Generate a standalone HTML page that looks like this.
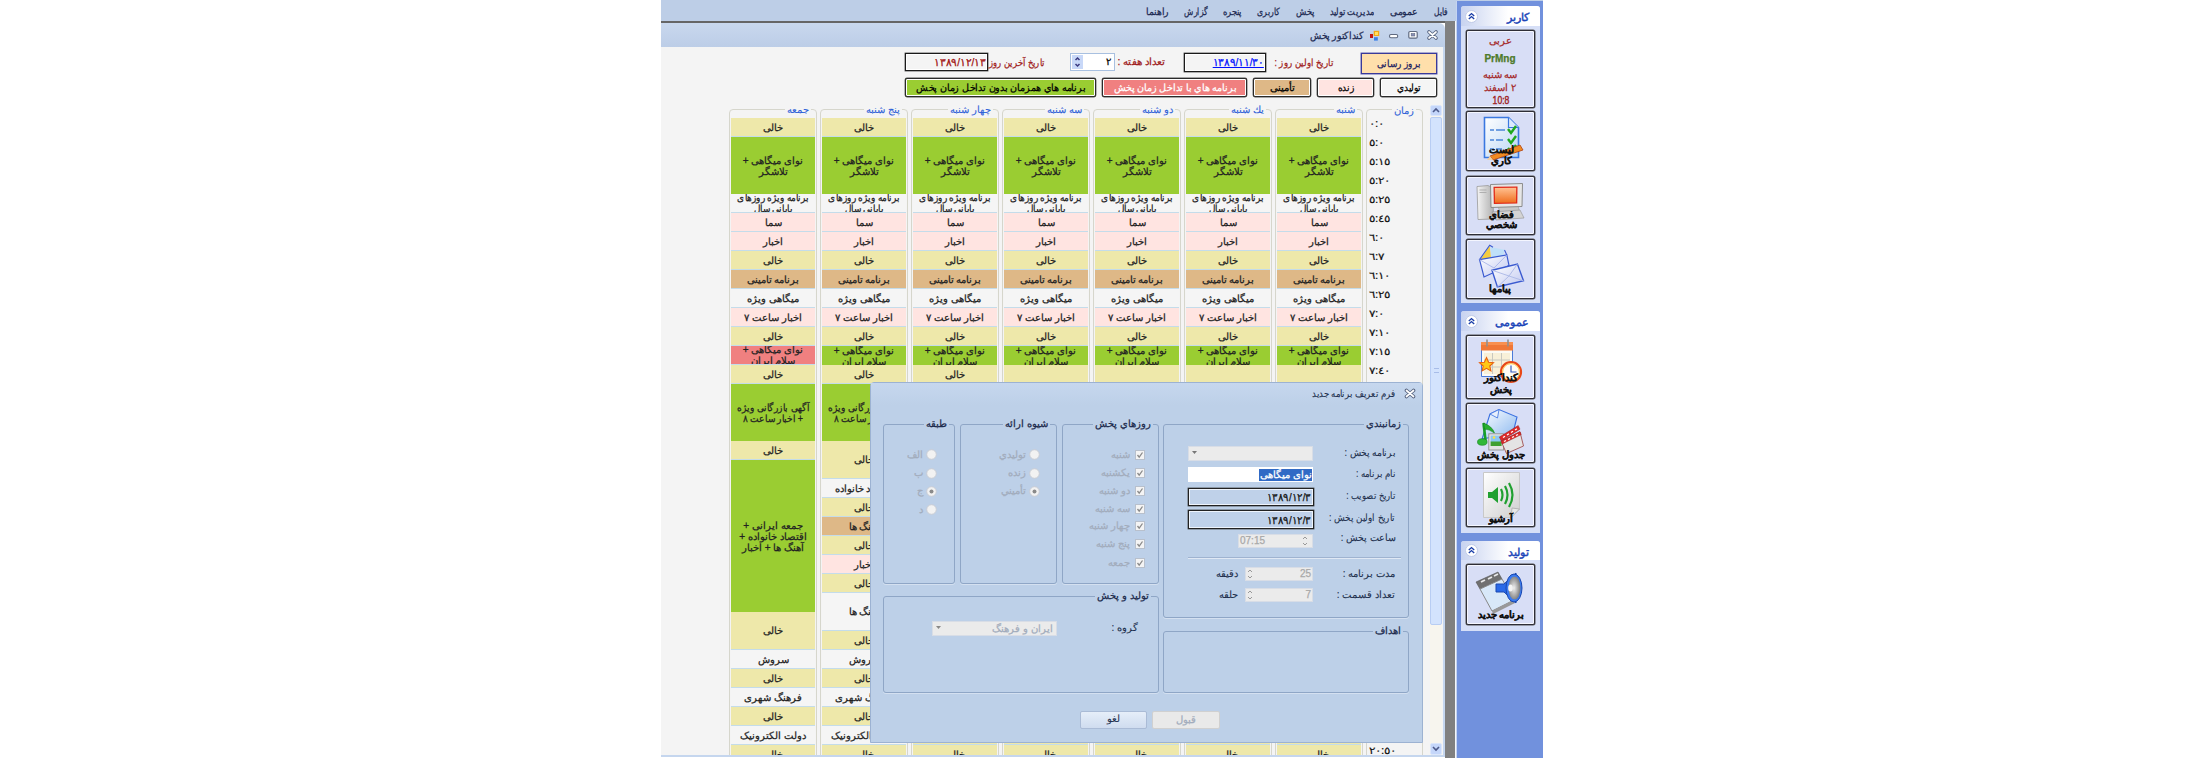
<!DOCTYPE html><html><head><meta charset="utf-8"><title>kondaktor</title><style>
*{box-sizing:border-box}
html,body{margin:0;padding:0;background:#fff}
body{width:2200px;height:760px;position:relative;overflow:hidden;font-family:"Liberation Sans",sans-serif;color:#000}
.ab{position:absolute}
.t{white-space:nowrap;direction:rtl;-webkit-text-stroke:0.25px currentColor}
.c{text-align:center}
</style></head><body>
<div class="ab " style="left:661px;top:0px;width:795px;height:21px;background:#bdcee7"></div>
<div class="ab t " style="right:752px;top:5.0px;height:14px;line-height:14px;font-size:10px;transform:scaleX(0.747);transform-origin:right center;color:#1b2850">فایل</div>
<div class="ab t " style="right:782px;top:5.0px;height:14px;line-height:14px;font-size:10px;transform:scaleX(0.927);transform-origin:right center;color:#1b2850">عمومی</div>
<div class="ab t " style="right:826px;top:5.0px;height:14px;line-height:14px;font-size:10px;transform:scaleX(0.822);transform-origin:right center;color:#1b2850">مدیریت تولید</div>
<div class="ab t " style="right:885.5px;top:5.0px;height:14px;line-height:14px;font-size:10px;transform:scaleX(0.841);transform-origin:right center;color:#1b2850">پخش</div>
<div class="ab t " style="right:920px;top:5.0px;height:14px;line-height:14px;font-size:10px;transform:scaleX(0.777);transform-origin:right center;color:#1b2850">کاربری</div>
<div class="ab t " style="right:958px;top:5.0px;height:14px;line-height:14px;font-size:10px;transform:scaleX(0.839);transform-origin:right center;color:#1b2850">پنجره</div>
<div class="ab t " style="right:992px;top:5.0px;height:14px;line-height:14px;font-size:10px;transform:scaleX(0.761);transform-origin:right center;color:#1b2850">گزارش</div>
<div class="ab t " style="right:1031px;top:5.0px;height:14px;line-height:14px;font-size:10px;transform:scaleX(0.92);transform-origin:right center;color:#1b2850">راهنما</div>
<div class="ab " style="left:661px;top:21px;width:795px;height:2px;background:#666"></div>
<div class="ab " style="left:1445px;top:21px;width:10px;height:737px;background:#808080"></div>
<div class="ab " style="left:1455px;top:21px;width:1px;height:737px;background:#f4f6fa"></div>
<div class="ab " style="left:661px;top:23px;width:784px;height:24px;background:linear-gradient(#c9d8ee,#bccde7);border-top-right-radius:6px"></div>
<div class="ab t " style="right:836px;top:28.5px;height:14px;line-height:14px;font-size:10px;transform:scaleX(0.92);transform-origin:right center;color:#1b2850">کنداکتور پخش</div>
<svg class="ab" style="left:1365px;top:25px" width="80" height="20"><rect x="5" y="9" width="3" height="4" fill="#c01818"/><rect x="8.7" y="5.8" width="5.5" height="5.2" fill="#f4a818"/><rect x="10" y="7" width="3" height="3" fill="#ffe060"/><rect x="9" y="12.2" width="3.8" height="3.4" fill="#3a80e8"/><rect x="24.5" y="9.5" width="8.2" height="3.2" rx="1.4" fill="#fff" stroke="#5f6a80" stroke-width="1.1"/><rect x="43.8" y="6.5" width="8.4" height="6.6" rx="1.2" fill="#fff" stroke="#5f6a80" stroke-width="1.2"/><rect x="46.2" y="8.6" width="3.6" height="2.4" fill="#8a90b8" stroke="#5f6a80" stroke-width="0.6"/><path d="M64 7 L71 13 M71 7 L64 13" stroke="#55627e" stroke-width="3.6" stroke-linecap="round"/><path d="M64 7 L71 13 M71 7 L64 13" stroke="#fff" stroke-width="1.7" stroke-linecap="round"/></svg>
<div class="ab " style="left:661px;top:47px;width:782px;height:708px;background:#f4f4f4"></div>
<div class="ab " style="left:1443px;top:47px;width:2px;height:710px;background:#c5d6ee"></div>
<div class="ab " style="left:661px;top:755px;width:784px;height:2px;background:#c5d6ee"></div>
<div class="ab " style="left:1361px;top:53px;width:76px;height:21px;background:#ffdfab;border:1px solid #3a3a9a;box-shadow:0 0 0 0.5px #6060b0"></div>
<div class="ab t c " style="left:1299.0px;width:200px;top:57.0px;height:14px;line-height:14px;font-size:10px;transform:scaleX(0.89);color:#1b2060">بروز رسانی</div>
<div class="ab " style="left:1184px;top:53px;width:82px;height:19px;background:#f4f4f4;border:1px solid #1a1a1a;box-shadow:inset 0 0 0 1px #fff,0 0 0 0.4px #444"></div>
<div class="ab t " style="right:936px;top:55.0px;height:14px;line-height:14px;font-size:10.5px;transform:scaleX(0.95);transform-origin:right center;color:#0010ff"><u>١٣٨٩/١١/٣٠</u></div>
<div class="ab t " style="right:867px;top:56.0px;height:14px;line-height:14px;font-size:10px;transform:scaleX(0.86);transform-origin:right center;color:#a02020">تاریخ اولین روز :</div>
<div class="ab " style="left:1070px;top:53px;width:45px;height:18px;background:#fff;border:1px solid #a8c0e0"></div>
<div class="ab " style="left:1072px;top:55px;width:11px;height:14px;background:#c8d8f8"></div>
<svg class="ab" style="left:1073px;top:55px" width="9" height="14"><path d="M2.5 5 L4.5 3 L6.5 5 M2.5 9 L4.5 11 L6.5 9" fill="none" stroke="#3a3a80" stroke-width="1.5"/></svg>
<div class="ab t " style="right:1089px;top:54.5px;height:14px;line-height:14px;font-size:10px;color:#000">٢</div>
<div class="ab t " style="right:1035px;top:55.0px;height:14px;line-height:14px;font-size:10px;transform:scaleX(1.03);transform-origin:right center;color:#a02020">تعداد هفته :</div>
<div class="ab " style="left:905px;top:53px;width:83px;height:18px;background:#f4f4f4;border:1px solid #1a1a1a;box-shadow:inset 0 0 0 1px #fff,0 0 0 0.4px #444"></div>
<div class="ab t " style="right:1214.5px;top:55.0px;height:14px;line-height:14px;font-size:10.5px;transform:scaleX(0.96);transform-origin:right center;color:#a01010">١٣٨٩/١٢/١٣</div>
<div class="ab t " style="right:1155px;top:56.0px;height:14px;line-height:14px;font-size:10px;transform:scaleX(0.84);transform-origin:right center;color:#a02020">تاریخ آخرین روز</div>
<div class="ab " style="left:1380px;top:78px;width:57px;height:19px;background:#f5f5f5;border:1px solid #2a2a2a;box-shadow:inset 0 0 0 1px #fff,0 0 0 0.4px #555;border-radius:2px"></div>
<div class="ab t c " style="left:1308.5px;width:200px;top:81.0px;height:14px;line-height:14px;font-size:10px;transform:scaleX(0.9);color:#000">توليدي</div>
<div class="ab " style="left:1317px;top:78px;width:57px;height:19px;background:#ffe4e1;border:1px solid #2a2a2a;box-shadow:inset 0 0 0 1px #fff,0 0 0 0.4px #555;border-radius:2px"></div>
<div class="ab t c " style="left:1245.5px;width:200px;top:81.0px;height:14px;line-height:14px;font-size:10px;transform:scaleX(0.9);color:#000">زنده</div>
<div class="ab " style="left:1253px;top:78px;width:58px;height:19px;background:#deb887;border:1px solid #2a2a2a;box-shadow:inset 0 0 0 1px #fff,0 0 0 0.4px #555;border-radius:2px"></div>
<div class="ab t c " style="left:1182.0px;width:200px;top:81.0px;height:14px;line-height:14px;font-size:10px;color:#000">تأمینی</div>
<div class="ab " style="left:1102px;top:78px;width:145px;height:19px;background:#f08080;border:1px solid #2a2a2a;box-shadow:inset 0 0 0 1px #fff,0 0 0 0.4px #555;border-radius:2px"></div>
<div class="ab t c " style="left:1074.5px;width:200px;top:81.0px;height:14px;line-height:14px;font-size:10px;transform:scaleX(0.96);color:#fff">برنامه هاي با تداخل زمان پخش</div>
<div class="ab " style="left:905px;top:78px;width:191px;height:19px;background:#9acd32;border:1px solid #2a2a2a;box-shadow:inset 0 0 0 1px #fff,0 0 0 0.4px #555;border-radius:2px"></div>
<div class="ab t c " style="left:900.5px;width:200px;top:81.0px;height:14px;line-height:14px;font-size:10px;transform:scaleX(0.96);color:#000">برنامه هاي همزمان بدون تداخل زمان پخش</div>
<div class="ab" style="left:661px;top:100px;width:782px;height:655px;overflow:hidden">
<div class="ab gb" style="left:68px;top:9px;width:88px;height:791px;"></div>
<div class="ab cell sep" style="left:70px;top:18px;width:84px;height:19px;background:#eee8aa">خالی</div>
<div class="ab cell " style="left:70px;top:37px;width:84px;height:57px;background:#9acd32">نوای میگاهی +<br>تلاشگر</div>
<div class="ab cell sep" style="left:70px;top:94px;width:84px;height:19px;background:#f5f5f5"><span style="display:inline-block;transform:scaleX(0.89)">برنامه ویژه روزهای<br>پایانی سال</span></div>
<div class="ab cell sep" style="left:70px;top:113px;width:84px;height:19px;background:#ffe4e1">سما</div>
<div class="ab cell sep" style="left:70px;top:132px;width:84px;height:19px;background:#ffe4e1">اخبار</div>
<div class="ab cell sep" style="left:70px;top:151px;width:84px;height:19px;background:#eee8aa">خالی</div>
<div class="ab cell sep" style="left:70px;top:170px;width:84px;height:19px;background:#deb887">برنامه تامینی</div>
<div class="ab cell sep" style="left:70px;top:189px;width:84px;height:19px;background:#f5f5f5">میگاهی ویژه</div>
<div class="ab cell sep" style="left:70px;top:208px;width:84px;height:19px;background:#ffe4e1">اخبار ساعت ٧</div>
<div class="ab cell sep" style="left:70px;top:227px;width:84px;height:19px;background:#eee8aa">خالی</div>
<div class="ab cell sep" style="left:70px;top:246px;width:84px;height:19px;background:#f08080">نوای میگاهی +<br>سلام ایران</div>
<div class="ab cell sep" style="left:70px;top:265px;width:84px;height:19px;background:#eee8aa">خالی</div>
<div class="ab cell " style="left:70px;top:284px;width:84px;height:57px;background:#9acd32"><span style="display:inline-block;transform:scaleX(0.9)">آگهی بازرگانی ویژه<br>+ اخبار ساعت ٨</span></div>
<div class="ab cell sep" style="left:70px;top:341px;width:84px;height:19px;background:#eee8aa">خالی</div>
<div class="ab cell " style="left:70px;top:360px;width:84px;height:152px;background:#9acd32">جمعه ایرانی +<br>اقتصاد خانواده +<br>آهنگ ها + اخبار</div>
<div class="ab cell sep" style="left:70px;top:512px;width:84px;height:38px;background:#eee8aa">خالی</div>
<div class="ab cell sep" style="left:70px;top:550px;width:84px;height:19px;background:#f5f5f5">سروش</div>
<div class="ab cell sep" style="left:70px;top:569px;width:84px;height:19px;background:#eee8aa">خالی</div>
<div class="ab cell sep" style="left:70px;top:588px;width:84px;height:19px;background:#f5f5f5">فرهنگ شهری</div>
<div class="ab cell sep" style="left:70px;top:607px;width:84px;height:19px;background:#eee8aa">خالی</div>
<div class="ab cell sep" style="left:70px;top:626px;width:84px;height:19px;background:#f5f5f5">دولت الکترونیک</div>
<div class="ab cell sep" style="left:70px;top:645px;width:84px;height:19px;background:#eee8aa">خالی</div>
<div class="ab t gt" style="right:632px;top:3px;height:14px;line-height:14px;font-size:10px">جمعه</div>
<div class="ab gb" style="left:159px;top:9px;width:88px;height:791px;"></div>
<div class="ab cell sep" style="left:161px;top:18px;width:84px;height:19px;background:#eee8aa">خالی</div>
<div class="ab cell " style="left:161px;top:37px;width:84px;height:57px;background:#9acd32">نوای میگاهی +<br>تلاشگر</div>
<div class="ab cell sep" style="left:161px;top:94px;width:84px;height:19px;background:#f5f5f5"><span style="display:inline-block;transform:scaleX(0.89)">برنامه ویژه روزهای<br>پایانی سال</span></div>
<div class="ab cell sep" style="left:161px;top:113px;width:84px;height:19px;background:#ffe4e1">سما</div>
<div class="ab cell sep" style="left:161px;top:132px;width:84px;height:19px;background:#ffe4e1">اخبار</div>
<div class="ab cell sep" style="left:161px;top:151px;width:84px;height:19px;background:#eee8aa">خالی</div>
<div class="ab cell sep" style="left:161px;top:170px;width:84px;height:19px;background:#deb887">برنامه تامینی</div>
<div class="ab cell sep" style="left:161px;top:189px;width:84px;height:19px;background:#f5f5f5">میگاهی ویژه</div>
<div class="ab cell sep" style="left:161px;top:208px;width:84px;height:19px;background:#ffe4e1">اخبار ساعت ٧</div>
<div class="ab cell sep" style="left:161px;top:227px;width:84px;height:19px;background:#eee8aa">خالی</div>
<div class="ab cell " style="left:161px;top:246px;width:84px;height:19px;background:#9acd32">نوای میگاهی +<br>سلام ایران</div>
<div class="ab cell sep" style="left:161px;top:265px;width:84px;height:19px;background:#eee8aa">خالی</div>
<div class="ab cell " style="left:161px;top:284px;width:84px;height:57px;background:#9acd32"><span style="display:inline-block;transform:scaleX(0.9)">آگهی بازرگانی ویژه<br>+ اخبار ساعت ٨</span></div>
<div class="ab cell sep" style="left:161px;top:341px;width:84px;height:38px;background:#eee8aa">خالی</div>
<div class="ab cell sep" style="left:161px;top:379px;width:84px;height:19px;background:#f5f5f5">اقتصاد خانواده</div>
<div class="ab cell sep" style="left:161px;top:398px;width:84px;height:19px;background:#eee8aa">خالی</div>
<div class="ab cell sep" style="left:161px;top:417px;width:84px;height:19px;background:#deb887">آهنگ ها</div>
<div class="ab cell sep" style="left:161px;top:436px;width:84px;height:19px;background:#eee8aa">خالی</div>
<div class="ab cell sep" style="left:161px;top:455px;width:84px;height:19px;background:#ffe4e1">اخبار</div>
<div class="ab cell sep" style="left:161px;top:474px;width:84px;height:19px;background:#eee8aa">خالی</div>
<div class="ab cell sep" style="left:161px;top:493px;width:84px;height:38px;background:#f5f5f5">آهنگ ها</div>
<div class="ab cell sep" style="left:161px;top:531px;width:84px;height:19px;background:#eee8aa">خالی</div>
<div class="ab cell sep" style="left:161px;top:550px;width:84px;height:19px;background:#f5f5f5">سروش</div>
<div class="ab cell sep" style="left:161px;top:569px;width:84px;height:19px;background:#eee8aa">خالی</div>
<div class="ab cell sep" style="left:161px;top:588px;width:84px;height:19px;background:#f5f5f5">فرهنگ شهری</div>
<div class="ab cell sep" style="left:161px;top:607px;width:84px;height:19px;background:#eee8aa">خالی</div>
<div class="ab cell sep" style="left:161px;top:626px;width:84px;height:19px;background:#f5f5f5">دولت الکترونیک</div>
<div class="ab cell sep" style="left:161px;top:645px;width:84px;height:19px;background:#eee8aa">خالی</div>
<div class="ab t gt" style="right:541px;top:3px;height:14px;line-height:14px;font-size:10px">پنج شنبه</div>
<div class="ab gb" style="left:250px;top:9px;width:88px;height:791px;"></div>
<div class="ab cell sep" style="left:252px;top:18px;width:84px;height:19px;background:#eee8aa">خالی</div>
<div class="ab cell " style="left:252px;top:37px;width:84px;height:57px;background:#9acd32">نوای میگاهی +<br>تلاشگر</div>
<div class="ab cell sep" style="left:252px;top:94px;width:84px;height:19px;background:#f5f5f5"><span style="display:inline-block;transform:scaleX(0.89)">برنامه ویژه روزهای<br>پایانی سال</span></div>
<div class="ab cell sep" style="left:252px;top:113px;width:84px;height:19px;background:#ffe4e1">سما</div>
<div class="ab cell sep" style="left:252px;top:132px;width:84px;height:19px;background:#ffe4e1">اخبار</div>
<div class="ab cell sep" style="left:252px;top:151px;width:84px;height:19px;background:#eee8aa">خالی</div>
<div class="ab cell sep" style="left:252px;top:170px;width:84px;height:19px;background:#deb887">برنامه تامینی</div>
<div class="ab cell sep" style="left:252px;top:189px;width:84px;height:19px;background:#f5f5f5">میگاهی ویژه</div>
<div class="ab cell sep" style="left:252px;top:208px;width:84px;height:19px;background:#ffe4e1">اخبار ساعت ٧</div>
<div class="ab cell sep" style="left:252px;top:227px;width:84px;height:19px;background:#eee8aa">خالی</div>
<div class="ab cell " style="left:252px;top:246px;width:84px;height:19px;background:#9acd32">نوای میگاهی +<br>سلام ایران</div>
<div class="ab cell sep" style="left:252px;top:265px;width:84px;height:19px;background:#eee8aa">خالی</div>
<div class="ab cell sep" style="left:252px;top:284px;width:84px;height:361px;background:#eee8aa"></div>
<div class="ab cell sep" style="left:252px;top:645px;width:84px;height:19px;background:#eee8aa">خالی</div>
<div class="ab t gt" style="right:450px;top:3px;height:14px;line-height:14px;font-size:10px">چهار شنبه</div>
<div class="ab gb" style="left:341px;top:9px;width:88px;height:791px;"></div>
<div class="ab cell sep" style="left:343px;top:18px;width:84px;height:19px;background:#eee8aa">خالی</div>
<div class="ab cell " style="left:343px;top:37px;width:84px;height:57px;background:#9acd32">نوای میگاهی +<br>تلاشگر</div>
<div class="ab cell sep" style="left:343px;top:94px;width:84px;height:19px;background:#f5f5f5"><span style="display:inline-block;transform:scaleX(0.89)">برنامه ویژه روزهای<br>پایانی سال</span></div>
<div class="ab cell sep" style="left:343px;top:113px;width:84px;height:19px;background:#ffe4e1">سما</div>
<div class="ab cell sep" style="left:343px;top:132px;width:84px;height:19px;background:#ffe4e1">اخبار</div>
<div class="ab cell sep" style="left:343px;top:151px;width:84px;height:19px;background:#eee8aa">خالی</div>
<div class="ab cell sep" style="left:343px;top:170px;width:84px;height:19px;background:#deb887">برنامه تامینی</div>
<div class="ab cell sep" style="left:343px;top:189px;width:84px;height:19px;background:#f5f5f5">میگاهی ویژه</div>
<div class="ab cell sep" style="left:343px;top:208px;width:84px;height:19px;background:#ffe4e1">اخبار ساعت ٧</div>
<div class="ab cell sep" style="left:343px;top:227px;width:84px;height:19px;background:#eee8aa">خالی</div>
<div class="ab cell " style="left:343px;top:246px;width:84px;height:19px;background:#9acd32">نوای میگاهی +<br>سلام ایران</div>
<div class="ab cell sep" style="left:343px;top:265px;width:84px;height:38px;background:#eee8aa"><span style="position:relative;top:3px">خالی</span></div>
<div class="ab cell sep" style="left:343px;top:303px;width:84px;height:342px;background:#eee8aa"></div>
<div class="ab cell sep" style="left:343px;top:645px;width:84px;height:19px;background:#eee8aa">خالی</div>
<div class="ab t gt" style="right:359px;top:3px;height:14px;line-height:14px;font-size:10px">سه شنبه</div>
<div class="ab gb" style="left:432px;top:9px;width:88px;height:791px;"></div>
<div class="ab cell sep" style="left:434px;top:18px;width:84px;height:19px;background:#eee8aa">خالی</div>
<div class="ab cell " style="left:434px;top:37px;width:84px;height:57px;background:#9acd32">نوای میگاهی +<br>تلاشگر</div>
<div class="ab cell sep" style="left:434px;top:94px;width:84px;height:19px;background:#f5f5f5"><span style="display:inline-block;transform:scaleX(0.89)">برنامه ویژه روزهای<br>پایانی سال</span></div>
<div class="ab cell sep" style="left:434px;top:113px;width:84px;height:19px;background:#ffe4e1">سما</div>
<div class="ab cell sep" style="left:434px;top:132px;width:84px;height:19px;background:#ffe4e1">اخبار</div>
<div class="ab cell sep" style="left:434px;top:151px;width:84px;height:19px;background:#eee8aa">خالی</div>
<div class="ab cell sep" style="left:434px;top:170px;width:84px;height:19px;background:#deb887">برنامه تامینی</div>
<div class="ab cell sep" style="left:434px;top:189px;width:84px;height:19px;background:#f5f5f5">میگاهی ویژه</div>
<div class="ab cell sep" style="left:434px;top:208px;width:84px;height:19px;background:#ffe4e1">اخبار ساعت ٧</div>
<div class="ab cell sep" style="left:434px;top:227px;width:84px;height:19px;background:#eee8aa">خالی</div>
<div class="ab cell " style="left:434px;top:246px;width:84px;height:19px;background:#9acd32">نوای میگاهی +<br>سلام ایران</div>
<div class="ab cell sep" style="left:434px;top:265px;width:84px;height:38px;background:#eee8aa"><span style="position:relative;top:3px">خالی</span></div>
<div class="ab cell sep" style="left:434px;top:303px;width:84px;height:342px;background:#eee8aa"></div>
<div class="ab cell sep" style="left:434px;top:645px;width:84px;height:19px;background:#eee8aa">خالی</div>
<div class="ab t gt" style="right:268px;top:3px;height:14px;line-height:14px;font-size:10px">دو شنبه</div>
<div class="ab gb" style="left:523px;top:9px;width:88px;height:791px;"></div>
<div class="ab cell sep" style="left:525px;top:18px;width:84px;height:19px;background:#eee8aa">خالی</div>
<div class="ab cell " style="left:525px;top:37px;width:84px;height:57px;background:#9acd32">نوای میگاهی +<br>تلاشگر</div>
<div class="ab cell sep" style="left:525px;top:94px;width:84px;height:19px;background:#f5f5f5"><span style="display:inline-block;transform:scaleX(0.89)">برنامه ویژه روزهای<br>پایانی سال</span></div>
<div class="ab cell sep" style="left:525px;top:113px;width:84px;height:19px;background:#ffe4e1">سما</div>
<div class="ab cell sep" style="left:525px;top:132px;width:84px;height:19px;background:#ffe4e1">اخبار</div>
<div class="ab cell sep" style="left:525px;top:151px;width:84px;height:19px;background:#eee8aa">خالی</div>
<div class="ab cell sep" style="left:525px;top:170px;width:84px;height:19px;background:#deb887">برنامه تامینی</div>
<div class="ab cell sep" style="left:525px;top:189px;width:84px;height:19px;background:#f5f5f5">میگاهی ویژه</div>
<div class="ab cell sep" style="left:525px;top:208px;width:84px;height:19px;background:#ffe4e1">اخبار ساعت ٧</div>
<div class="ab cell sep" style="left:525px;top:227px;width:84px;height:19px;background:#eee8aa">خالی</div>
<div class="ab cell " style="left:525px;top:246px;width:84px;height:19px;background:#9acd32">نوای میگاهی +<br>سلام ایران</div>
<div class="ab cell sep" style="left:525px;top:265px;width:84px;height:38px;background:#eee8aa"><span style="position:relative;top:3px">خالی</span></div>
<div class="ab cell sep" style="left:525px;top:303px;width:84px;height:342px;background:#eee8aa"></div>
<div class="ab cell sep" style="left:525px;top:645px;width:84px;height:19px;background:#eee8aa">خالی</div>
<div class="ab t gt" style="right:177px;top:3px;height:14px;line-height:14px;font-size:10px">يك شنبه</div>
<div class="ab gb" style="left:614px;top:9px;width:88px;height:791px;"></div>
<div class="ab cell sep" style="left:616px;top:18px;width:84px;height:19px;background:#eee8aa">خالی</div>
<div class="ab cell " style="left:616px;top:37px;width:84px;height:57px;background:#9acd32">نوای میگاهی +<br>تلاشگر</div>
<div class="ab cell sep" style="left:616px;top:94px;width:84px;height:19px;background:#f5f5f5"><span style="display:inline-block;transform:scaleX(0.89)">برنامه ویژه روزهای<br>پایانی سال</span></div>
<div class="ab cell sep" style="left:616px;top:113px;width:84px;height:19px;background:#ffe4e1">سما</div>
<div class="ab cell sep" style="left:616px;top:132px;width:84px;height:19px;background:#ffe4e1">اخبار</div>
<div class="ab cell sep" style="left:616px;top:151px;width:84px;height:19px;background:#eee8aa">خالی</div>
<div class="ab cell sep" style="left:616px;top:170px;width:84px;height:19px;background:#deb887">برنامه تامینی</div>
<div class="ab cell sep" style="left:616px;top:189px;width:84px;height:19px;background:#f5f5f5">میگاهی ویژه</div>
<div class="ab cell sep" style="left:616px;top:208px;width:84px;height:19px;background:#ffe4e1">اخبار ساعت ٧</div>
<div class="ab cell sep" style="left:616px;top:227px;width:84px;height:19px;background:#eee8aa">خالی</div>
<div class="ab cell " style="left:616px;top:246px;width:84px;height:19px;background:#9acd32">نوای میگاهی +<br>سلام ایران</div>
<div class="ab cell sep" style="left:616px;top:265px;width:84px;height:38px;background:#eee8aa"><span style="position:relative;top:3px">خالی</span></div>
<div class="ab cell sep" style="left:616px;top:303px;width:84px;height:342px;background:#eee8aa"></div>
<div class="ab cell sep" style="left:616px;top:645px;width:84px;height:19px;background:#eee8aa">خالی</div>
<div class="ab t gt" style="right:86px;top:3px;height:14px;line-height:14px;font-size:10px">شنبه</div>
<div class="ab gb" style="left:705px;top:9px;width:57px;height:791px;"></div>
<div class="ab t gt" style="right:27px;top:3.5px;height:14px;line-height:14px;font-size:10px">زمان</div>
<div class="ab t" style="left:708px;top:17px;height:14px;line-height:14px;font-size:10px;color:#111;transform:scaleX(1.2);transform-origin:left center;-webkit-text-stroke:0.15px #111">٠:٠</div>
<div class="ab t" style="left:708px;top:36px;height:14px;line-height:14px;font-size:10px;color:#111;transform:scaleX(1.2);transform-origin:left center;-webkit-text-stroke:0.15px #111">٥:٠</div>
<div class="ab t" style="left:708px;top:55px;height:14px;line-height:14px;font-size:10px;color:#111;transform:scaleX(1.2);transform-origin:left center;-webkit-text-stroke:0.15px #111">٥:١٥</div>
<div class="ab t" style="left:708px;top:74px;height:14px;line-height:14px;font-size:10px;color:#111;transform:scaleX(1.2);transform-origin:left center;-webkit-text-stroke:0.15px #111">٥:٢٠</div>
<div class="ab t" style="left:708px;top:93px;height:14px;line-height:14px;font-size:10px;color:#111;transform:scaleX(1.2);transform-origin:left center;-webkit-text-stroke:0.15px #111">٥:٢٥</div>
<div class="ab t" style="left:708px;top:112px;height:14px;line-height:14px;font-size:10px;color:#111;transform:scaleX(1.2);transform-origin:left center;-webkit-text-stroke:0.15px #111">٥:٤٥</div>
<div class="ab t" style="left:708px;top:131px;height:14px;line-height:14px;font-size:10px;color:#111;transform:scaleX(1.2);transform-origin:left center;-webkit-text-stroke:0.15px #111">٦:٠</div>
<div class="ab t" style="left:708px;top:150px;height:14px;line-height:14px;font-size:10px;color:#111;transform:scaleX(1.2);transform-origin:left center;-webkit-text-stroke:0.15px #111">٦:٧</div>
<div class="ab t" style="left:708px;top:169px;height:14px;line-height:14px;font-size:10px;color:#111;transform:scaleX(1.2);transform-origin:left center;-webkit-text-stroke:0.15px #111">٦:١٠</div>
<div class="ab t" style="left:708px;top:188px;height:14px;line-height:14px;font-size:10px;color:#111;transform:scaleX(1.2);transform-origin:left center;-webkit-text-stroke:0.15px #111">٦:٢٥</div>
<div class="ab t" style="left:708px;top:207px;height:14px;line-height:14px;font-size:10px;color:#111;transform:scaleX(1.2);transform-origin:left center;-webkit-text-stroke:0.15px #111">٧:٠</div>
<div class="ab t" style="left:708px;top:226px;height:14px;line-height:14px;font-size:10px;color:#111;transform:scaleX(1.2);transform-origin:left center;-webkit-text-stroke:0.15px #111">٧:١٠</div>
<div class="ab t" style="left:708px;top:245px;height:14px;line-height:14px;font-size:10px;color:#111;transform:scaleX(1.2);transform-origin:left center;-webkit-text-stroke:0.15px #111">٧:١٥</div>
<div class="ab t" style="left:708px;top:264px;height:14px;line-height:14px;font-size:10px;color:#111;transform:scaleX(1.2);transform-origin:left center;-webkit-text-stroke:0.15px #111">٧:٤٠</div>
<div class="ab t" style="left:708px;top:283px;height:14px;line-height:14px;font-size:10px;color:#111;transform:scaleX(1.2);transform-origin:left center;-webkit-text-stroke:0.15px #111">٨:٠</div>
<div class="ab t" style="left:708px;top:644px;height:14px;line-height:14px;font-size:10px;color:#111;transform:scaleX(1.2);transform-origin:left center;-webkit-text-stroke:0.15px #111">٢٠:٥٠</div>
</div>
<div class="ab " style="left:1430px;top:105px;width:12px;height:650px;background:#f7f5ee"></div>
<div class="ab " style="left:1430px;top:105px;width:12px;height:11px;background:#c4d6fa;border:1px solid #dbe6fb;border-radius:2px"></div>
<svg class="ab" style="left:1431px;top:106px" width="10" height="9"><path d="M2 6 L5 3 L8 6" fill="none" stroke="#4d5a8a" stroke-width="1.6"/></svg>
<div class="ab " style="left:1430px;top:117px;width:12px;height:508px;background:#d3e3fd;border:1px solid #b8cdf3;border-radius:2px"></div>
<div class="ab " style="left:1434px;top:368px;width:5px;height:5px;border-top:1px solid #a8bde8;border-bottom:1px solid #a8bde8"></div>
<div class="ab " style="left:1430px;top:743px;width:12px;height:12px;background:#c4d6fa;border:1px solid #dbe6fb;border-radius:2px"></div>
<svg class="ab" style="left:1431px;top:744px" width="10" height="9"><path d="M2 3 L5 6 L8 3" fill="none" stroke="#4d5a8a" stroke-width="1.6"/></svg>
<div class="ab " style="left:1456px;top:0px;width:87px;height:758px;background:#7191dd"></div>
<div class="ab " style="left:1456px;top:0px;width:1px;height:758px;background:#c4d4f2"></div>
<div class="ab " style="left:1456px;top:0px;width:87px;height:1px;background:#bdcee7"></div>
<div class="ab " style="left:1461px;top:6px;width:79px;height:297px;background:#d6dff7;border-radius:3px 3px 0 0"></div>
<div class="ab " style="left:1461px;top:6px;width:79px;height:20px;background:linear-gradient(to right,#c8d3f0,#ffffff 60%);border-radius:3px 3px 0 0"></div>
<div class="ab t " style="right:671.5px;top:10.3px;height:14px;line-height:14px;font-size:11px;color:#1a44b8;-webkit-text-stroke:0.45px #1a44b8">کاربر</div>
<svg class="ab" style="left:1464px;top:8.7px" width="15" height="15"><circle cx="7.5" cy="7.5" r="6" fill="#fff" stroke="#c0cbe8" stroke-width="1"/><path d="M4.8 7 L7.5 4.6 L10.2 7 M4.8 10 L7.5 7.6 L10.2 10" fill="none" stroke="#1b3fa8" stroke-width="1.4"/></svg>
<div class="ab " style="left:1461px;top:311px;width:79px;height:222px;background:#d6dff7;border-radius:3px 3px 0 0"></div>
<div class="ab " style="left:1461px;top:311px;width:79px;height:20px;background:linear-gradient(to right,#c8d3f0,#ffffff 60%);border-radius:3px 3px 0 0"></div>
<div class="ab t " style="right:671.5px;top:315.3px;height:14px;line-height:14px;font-size:11px;color:#1a44b8;-webkit-text-stroke:0.45px #1a44b8">عمومی</div>
<svg class="ab" style="left:1464px;top:313.7px" width="15" height="15"><circle cx="7.5" cy="7.5" r="6" fill="#fff" stroke="#c0cbe8" stroke-width="1"/><path d="M4.8 7 L7.5 4.6 L10.2 7 M4.8 10 L7.5 7.6 L10.2 10" fill="none" stroke="#1b3fa8" stroke-width="1.4"/></svg>
<div class="ab " style="left:1461px;top:541px;width:79px;height:90px;background:#d6dff7;border-radius:3px 3px 0 0"></div>
<div class="ab " style="left:1461px;top:541px;width:79px;height:19px;background:linear-gradient(to right,#c8d3f0,#ffffff 60%);border-radius:3px 3px 0 0"></div>
<div class="ab t " style="right:671.5px;top:544.8px;height:14px;line-height:14px;font-size:11px;color:#1a44b8;-webkit-text-stroke:0.45px #1a44b8">تولید</div>
<svg class="ab" style="left:1464px;top:543.2px" width="15" height="15"><circle cx="7.5" cy="7.5" r="6" fill="#fff" stroke="#c0cbe8" stroke-width="1"/><path d="M4.8 7 L7.5 4.6 L10.2 7 M4.8 10 L7.5 7.6 L10.2 10" fill="none" stroke="#1b3fa8" stroke-width="1.4"/></svg>
<div class="ab " style="left:1466px;top:30px;width:69px;height:78px;border:1px solid #2e2e36;box-shadow:inset 0 0 0 1px #f4f6ff,0 0 0 0.5px #555;border-radius:2px;background:#d8def6"></div>
<div class="ab t c " style="left:1400.5px;width:200px;top:33.5px;height:14px;line-height:14px;font-size:10px;color:#a52a2a">عربی</div>
<div class="ab t c " style="left:1400.0px;width:200px;top:52.0px;height:14px;line-height:14px;font-size:10px;color:#4e7a2a;font-weight:bold">PrMng</div>
<div class="ab t c " style="left:1400.0px;width:200px;top:68.0px;height:14px;line-height:14px;font-size:10px;color:#a52a2a">سه شنبه</div>
<div class="ab t c " style="left:1400.0px;width:200px;top:80.5px;height:14px;line-height:14px;font-size:10px;color:#a52a2a">٢ اسفند</div>
<div class="ab t c " style="left:1400.5px;width:200px;top:92.5px;height:14px;line-height:14px;font-size:10.5px;transform:scaleX(0.82);color:#a02222;-webkit-text-stroke:0.4px #a02222">10:8</div>
<div class="ab " style="left:1466px;top:111px;width:69px;height:60px;border:1px solid #2e2e36;box-shadow:inset 0 0 0 1px #f4f6ff,0 0 0 0.5px #555;border-radius:2px;background:#d8def6"></div>
<div class="ab " style="left:1466px;top:176px;width:69px;height:59px;border:1px solid #2e2e36;box-shadow:inset 0 0 0 1px #f4f6ff,0 0 0 0.5px #555;border-radius:2px;background:#d8def6"></div>
<div class="ab " style="left:1466px;top:239px;width:69px;height:60px;border:1px solid #2e2e36;box-shadow:inset 0 0 0 1px #f4f6ff,0 0 0 0.5px #555;border-radius:2px;background:#d8def6"></div>
<div class="ab " style="left:1466px;top:335px;width:69px;height:64px;border:1px solid #2e2e36;box-shadow:inset 0 0 0 1px #f4f6ff,0 0 0 0.5px #555;border-radius:2px;background:#d8def6"></div>
<div class="ab " style="left:1466px;top:403px;width:69px;height:60px;border:1px solid #2e2e36;box-shadow:inset 0 0 0 1px #f4f6ff,0 0 0 0.5px #555;border-radius:2px;background:#d8def6"></div>
<div class="ab " style="left:1466px;top:468px;width:69px;height:59px;border:1px solid #2e2e36;box-shadow:inset 0 0 0 1px #f4f6ff,0 0 0 0.5px #555;border-radius:2px;background:#d8def6"></div>
<div class="ab " style="left:1466px;top:564px;width:69px;height:61px;border:1px solid #2e2e36;box-shadow:inset 0 0 0 1px #f4f6ff,0 0 0 0.5px #555;border-radius:2px;background:#d8def6"></div>
<div class="ab dg" style="left:870px;top:382px;width:553px;height:361px;"></div>
<div class="ab " style="left:871px;top:383px;width:551px;height:22px;background:linear-gradient(#c6d7ee,#bdd0e8)"></div>
<div class="ab t dl" style="right:805px;top:387.5px;height:14px;line-height:14px;font-size:10px;transform:scaleX(0.86);transform-origin:right center;">فرم تعریف برنامه جدید</div>
<svg class="ab" style="left:1404px;top:388px" width="12" height="12"><path d="M2.5 2.5 L9.5 8.5 M9.5 2.5 L2.5 8.5" stroke="#55627e" stroke-width="3.6" stroke-linecap="round"/><path d="M2.5 2.5 L9.5 8.5 M9.5 2.5 L2.5 8.5" stroke="#fff" stroke-width="1.7" stroke-linecap="round"/></svg>
<div class="ab fg" style="left:1163px;top:424px;width:246px;height:194px;"></div>
<div class="ab t ft" style="right:797px;top:417.0px;height:14px;line-height:14px;font-size:10px;font-size:10px">زمانبندي</div>
<div class="ab fg" style="left:1163px;top:631px;width:246px;height:62px;"></div>
<div class="ab t ft" style="right:797px;top:624.0px;height:14px;line-height:14px;font-size:10px;font-size:10px">اهداف</div>
<div class="ab fg" style="left:1062px;top:424px;width:97px;height:160px;"></div>
<div class="ab t ft" style="right:1047px;top:417.0px;height:14px;line-height:14px;font-size:10px;font-size:10px">روزهاي پخش</div>
<div class="ab fg" style="left:960px;top:424px;width:97px;height:160px;"></div>
<div class="ab t ft" style="right:1150px;top:417.0px;height:14px;line-height:14px;font-size:10px;font-size:10px">شیوه ارائه</div>
<div class="ab fg" style="left:883px;top:424px;width:72px;height:160px;"></div>
<div class="ab t ft" style="right:1251px;top:417.0px;height:14px;line-height:14px;font-size:10px;font-size:10px">طبقه</div>
<div class="ab fg" style="left:883px;top:596px;width:276px;height:97px;"></div>
<div class="ab t ft" style="right:1049px;top:589.0px;height:14px;line-height:14px;font-size:10px;font-size:10px">تولید و پخش</div>
<div class="ab t dl" style="right:805px;top:447.0px;height:14px;line-height:14px;font-size:10px;transform:scaleX(0.92);transform-origin:right center;">برنامه پخش :</div>
<div class="ab inp" style="left:1188px;top:446px;width:125px;height:15px;"></div>
<svg class="ab" style="left:1192px;top:451px" width="6" height="4"><path d="M0 0 L5 0 L2.5 3z" fill="#777"/></svg>
<div class="ab t dl" style="right:805px;top:468.0px;height:14px;line-height:14px;font-size:10px;transform:scaleX(0.87);transform-origin:right center;">نام برنامه :</div>
<div class="ab " style="left:1188px;top:467px;width:125px;height:15px;background:#fff"></div>
<div class="ab " style="left:1259px;top:469px;width:53px;height:12px;background:#316ac5"></div>
<div class="ab t " style="right:888px;top:468.0px;height:14px;line-height:14px;font-size:10px;color:#fff;overflow:hidden;width:53px">نوای میگاهی</div>
<div class="ab t dl" style="right:805px;top:490.0px;height:14px;line-height:14px;font-size:10px;transform:scaleX(0.84);transform-origin:right center;">تاریخ تصویب :</div>
<div class="ab " style="left:1188px;top:488px;width:126px;height:18px;border:1px solid #222;box-shadow:inset 0 0 0 1px #eef4fc,0 0 0 0.4px #444;background:#bfd1e9"></div>
<div class="ab t " style="right:889px;top:490.0px;height:14px;line-height:14px;font-size:10.5px;transform:scaleX(0.92);transform-origin:right center;color:#111">١٣٨٩/١٢/٣</div>
<div class="ab t dl" style="right:805px;top:512.0px;height:14px;line-height:14px;font-size:10px;transform:scaleX(0.88);transform-origin:right center;">تاریخ اولین پخش :</div>
<div class="ab " style="left:1188px;top:510px;width:126px;height:19px;border:1px solid #222;box-shadow:inset 0 0 0 1px #eef4fc,0 0 0 0.4px #444;background:#bfd1e9"></div>
<div class="ab t " style="right:889px;top:512.5px;height:14px;line-height:14px;font-size:10.5px;transform:scaleX(0.92);transform-origin:right center;color:#111">١٣٨٩/١٢/٣</div>
<div class="ab t dl" style="right:805px;top:532.0px;height:14px;line-height:14px;font-size:10px;transform:scaleX(0.95);transform-origin:right center;">ساعت پخش :</div>
<div class="ab inp" style="left:1238px;top:534px;width:75px;height:14px;"></div>
<div class="ab t " style="left:1240px;top:534.0px;height:14px;line-height:14px;font-size:10px;direction:ltr;color:#a8a8a8">07:15</div>
<svg class="ab" style="left:1302px;top:535px" width="7" height="12"><path d="M1 4 L3 2 L5 4 M1 8 L3 10 L5 8" fill="none" stroke="#999" stroke-width="1"/></svg>
<div class="ab " style="left:1188px;top:557px;width:213px;height:2px;border-top:1px solid #9fb3d0;border-bottom:1px solid #e0e8f4"></div>
<div class="ab t dl" style="right:805px;top:568.0px;height:14px;line-height:14px;font-size:10px;">مدت برنامه :</div>
<div class="ab inp" style="left:1245px;top:567px;width:68px;height:14px;"></div>
<div class="ab t " style="right:889px;top:567.0px;height:14px;line-height:14px;font-size:10px;color:#a8a8a8;direction:ltr">25</div>
<svg class="ab" style="left:1247px;top:568px" width="7" height="12"><path d="M1 4 L3 2 L5 4 M1 8 L3 10 L5 8" fill="none" stroke="#999" stroke-width="1"/></svg>
<div class="ab t dl" style="right:962px;top:568.0px;height:14px;line-height:14px;font-size:10px;">دقیقه</div>
<div class="ab t dl" style="right:805px;top:589.0px;height:14px;line-height:14px;font-size:10px;">تعداد قسمت :</div>
<div class="ab inp" style="left:1245px;top:588px;width:68px;height:14px;"></div>
<div class="ab t " style="right:889px;top:588.0px;height:14px;line-height:14px;font-size:10px;color:#a8a8a8;direction:ltr">7</div>
<svg class="ab" style="left:1247px;top:589px" width="7" height="12"><path d="M1 4 L3 2 L5 4 M1 8 L3 10 L5 8" fill="none" stroke="#999" stroke-width="1"/></svg>
<div class="ab t dl" style="right:962px;top:589.0px;height:14px;line-height:14px;font-size:10px;">حلقه</div>
<div class="ab " style="left:1135px;top:449.7px;width:10px;height:10.0px;background:#f4f4f4;border:1px solid #b8c0cc"></div>
<svg class="ab" style="left:1136px;top:450.7px" width="8" height="8"><path d="M1.5 4 L3.2 6.2 L6.5 1.5" fill="none" stroke="#8a8a8a" stroke-width="1.3"/></svg>
<div class="ab t dis" style="right:1070px;top:447.7px;height:14px;line-height:14px;font-size:10px;">شنبه</div>
<div class="ab " style="left:1135px;top:468.2px;width:10px;height:10.0px;background:#f4f4f4;border:1px solid #b8c0cc"></div>
<svg class="ab" style="left:1136px;top:469.2px" width="8" height="8"><path d="M1.5 4 L3.2 6.2 L6.5 1.5" fill="none" stroke="#8a8a8a" stroke-width="1.3"/></svg>
<div class="ab t dis" style="right:1070px;top:466.2px;height:14px;line-height:14px;font-size:10px;">يكشنبه</div>
<div class="ab " style="left:1135px;top:486.3px;width:10px;height:10.0px;background:#f4f4f4;border:1px solid #b8c0cc"></div>
<svg class="ab" style="left:1136px;top:487.3px" width="8" height="8"><path d="M1.5 4 L3.2 6.2 L6.5 1.5" fill="none" stroke="#8a8a8a" stroke-width="1.3"/></svg>
<div class="ab t dis" style="right:1070px;top:484.3px;height:14px;line-height:14px;font-size:10px;">دو شنبه</div>
<div class="ab " style="left:1135px;top:504.2px;width:10px;height:10.000000000000057px;background:#f4f4f4;border:1px solid #b8c0cc"></div>
<svg class="ab" style="left:1136px;top:505.2px" width="8" height="8"><path d="M1.5 4 L3.2 6.2 L6.5 1.5" fill="none" stroke="#8a8a8a" stroke-width="1.3"/></svg>
<div class="ab t dis" style="right:1070px;top:502.2px;height:14px;line-height:14px;font-size:10px;">سه شنبه</div>
<div class="ab " style="left:1135px;top:521px;width:10px;height:10px;background:#f4f4f4;border:1px solid #b8c0cc"></div>
<svg class="ab" style="left:1136px;top:522px" width="8" height="8"><path d="M1.5 4 L3.2 6.2 L6.5 1.5" fill="none" stroke="#8a8a8a" stroke-width="1.3"/></svg>
<div class="ab t dis" style="right:1070px;top:519.0px;height:14px;line-height:14px;font-size:10px;">چهار شنبه</div>
<div class="ab " style="left:1135px;top:539.2px;width:10px;height:10.0px;background:#f4f4f4;border:1px solid #b8c0cc"></div>
<svg class="ab" style="left:1136px;top:540.2px" width="8" height="8"><path d="M1.5 4 L3.2 6.2 L6.5 1.5" fill="none" stroke="#8a8a8a" stroke-width="1.3"/></svg>
<div class="ab t dis" style="right:1070px;top:537.2px;height:14px;line-height:14px;font-size:10px;">پنج شنبه</div>
<div class="ab " style="left:1135px;top:557.6px;width:10px;height:10.0px;background:#f4f4f4;border:1px solid #b8c0cc"></div>
<svg class="ab" style="left:1136px;top:558.6px" width="8" height="8"><path d="M1.5 4 L3.2 6.2 L6.5 1.5" fill="none" stroke="#8a8a8a" stroke-width="1.3"/></svg>
<div class="ab t dis" style="right:1070px;top:555.6px;height:14px;line-height:14px;font-size:10px;">جمعه</div>
<svg class="ab" style="left:1029px;top:449.2px" width="11" height="11"><circle cx="5.5" cy="5.5" r="4.8" fill="#f2f2f2" stroke="#c8ccd4" stroke-width="1"/></svg>
<div class="ab t dis" style="right:1174px;top:447.7px;height:14px;line-height:14px;font-size:10px;">توليدي</div>
<svg class="ab" style="left:1029px;top:467.7px" width="11" height="11"><circle cx="5.5" cy="5.5" r="4.8" fill="#f2f2f2" stroke="#c8ccd4" stroke-width="1"/></svg>
<div class="ab t dis" style="right:1174px;top:466.2px;height:14px;line-height:14px;font-size:10px;">زنده</div>
<svg class="ab" style="left:1029px;top:485.8px" width="11" height="11"><circle cx="5.5" cy="5.5" r="4.8" fill="#f2f2f2" stroke="#c8ccd4" stroke-width="1"/><circle cx="5.5" cy="5.5" r="2" fill="#8a8a8a"/></svg>
<div class="ab t dis" style="right:1174px;top:484.3px;height:14px;line-height:14px;font-size:10px;">تأمیني</div>
<svg class="ab" style="left:926px;top:449.2px" width="11" height="11"><circle cx="5.5" cy="5.5" r="4.8" fill="#f2f2f2" stroke="#c8ccd4" stroke-width="1"/></svg>
<div class="ab t dis" style="right:1277px;top:447.7px;height:14px;line-height:14px;font-size:10px;">الف</div>
<svg class="ab" style="left:926px;top:467.7px" width="11" height="11"><circle cx="5.5" cy="5.5" r="4.8" fill="#f2f2f2" stroke="#c8ccd4" stroke-width="1"/></svg>
<div class="ab t dis" style="right:1277px;top:466.2px;height:14px;line-height:14px;font-size:10px;">ب</div>
<svg class="ab" style="left:926px;top:485.8px" width="11" height="11"><circle cx="5.5" cy="5.5" r="4.8" fill="#f2f2f2" stroke="#c8ccd4" stroke-width="1"/><circle cx="5.5" cy="5.5" r="2" fill="#8a8a8a"/></svg>
<div class="ab t dis" style="right:1277px;top:484.3px;height:14px;line-height:14px;font-size:10px;">ج</div>
<svg class="ab" style="left:926px;top:504.2px" width="11" height="11"><circle cx="5.5" cy="5.5" r="4.8" fill="#f2f2f2" stroke="#c8ccd4" stroke-width="1"/></svg>
<div class="ab t dis" style="right:1277px;top:502.7px;height:14px;line-height:14px;font-size:10px;">د</div>
<div class="ab t dl" style="right:1062px;top:622.0px;height:14px;line-height:14px;font-size:10px;">گروه :</div>
<div class="ab inp" style="left:932px;top:621px;width:125px;height:15px;"></div>
<div class="ab t dis" style="right:1147px;top:621.5px;height:14px;line-height:14px;font-size:10px;">ایران و فرهنگ</div>
<svg class="ab" style="left:936px;top:626px" width="6" height="4"><path d="M0 0 L5 0 L2.5 3z" fill="#888"/></svg>
<div class="ab " style="left:1080px;top:711px;width:67px;height:18px;background:linear-gradient(#e6eef9,#cfdcef);border:1px solid #aabbd6;border-radius:2px"></div>
<div class="ab t c dl" style="left:1013.0px;width:200px;top:713.0px;height:14px;line-height:14px;font-size:10px;">لغو</div>
<div class="ab " style="left:1152px;top:711px;width:68px;height:18px;background:#e9e9e9;border:1px solid #d0d0d0;border-radius:2px"></div>
<div class="ab t c dis" style="left:1086.0px;width:200px;top:713.0px;height:14px;line-height:14px;font-size:10px;">قبول</div>
<style>
.dg{background:#bdd0e8;border:1px solid #9cb2d2;border-radius:4px 4px 0 0}
.fg{border:1px solid #8fa6c6;border-radius:3px;box-shadow:0 1px 0 #d4e0f0}
.ft{background:#bdd0e8;color:#1c2a4c;padding:0 2px}
.dl{color:#22304e;-webkit-text-stroke:0.1px #22304e;margin-top:-1px}
.dis{color:#a2acbc}
.inp{background:#ebebeb;border:1px solid #d8dde6}
</style>
<svg class="ab" style="left:1480px;top:115px" width="46" height="46" viewBox="0 0 46 46">
<defs><linearGradient id="pg" x1="0" y1="0" x2="1" y2="1"><stop offset="0" stop-color="#ffffff"/><stop offset="1" stop-color="#b8d4f4"/></linearGradient></defs>
<path d="M4.5 2.5 H28.5 L38.5 12.5 V42.5 H4.5 Z" fill="url(#pg)" stroke="#3a78e0" stroke-width="1.6"/>
<path d="M28.5 2.5 V12.5 H38.5" fill="#dceafc" stroke="#3a78e0" stroke-width="1.2"/>
<path d="M10 15h4M16 15h9M10 25h4M16 25h7M10 34h4M16 34h6" stroke="#4a84d8" stroke-width="1.6"/>
<path d="M28 14 l3 4 l5 -7 M28 24 l3 4 l5 -7 M28 33 l3 4 l5 -7" fill="none" stroke="#1ea81e" stroke-width="2.4"/>
<path d="M10 41 L40 30 L43 35 L13 45 Z" fill="#f08a20" stroke="#b04010" stroke-width="0.8"/>
<path d="M10 41 L13 45 L7 45 Z" fill="#f4d0a0"/>
</svg>
<div class="ab t c " style="left:1401.0px;width:200px;top:142.5px;height:14px;line-height:14px;font-size:10px;font-weight:bold;color:#111">لیست</div>
<div class="ab t c " style="left:1401.0px;width:200px;top:154.0px;height:14px;line-height:14px;font-size:10px;font-weight:bold;color:#111">کاري</div>
<svg class="ab" style="left:1474px;top:181px" width="54" height="42" viewBox="0 0 54 42">
<defs><linearGradient id="tw" x1="0" y1="0" x2="1" y2="0"><stop offset="0" stop-color="#f4f4f4"/><stop offset="1" stop-color="#b0b0b0"/></linearGradient>
<linearGradient id="sc" x1="0" y1="0" x2="0" y2="1"><stop offset="0" stop-color="#ffc090"/><stop offset="1" stop-color="#f07020"/></linearGradient></defs>
<path d="M3 5.5 L14 4.5 L19 7 L19.5 38 L4 38.5 Z" fill="url(#tw)" stroke="#999" stroke-width="0.8"/>
<path d="M5.5 9 h7 M5.5 11.5 h7" stroke="#aaa" stroke-width="0.9"/>
<path d="M24 25 H44 L46 32 H26 Z" fill="#c8c8c8" stroke="#999" stroke-width="0.6"/>
<path d="M18 31 L46 29 L50 37 L22 39 Z" fill="#d4d4d4" stroke="#999" stroke-width="0.7"/>
<path d="M16.5 3.5 L48.5 2.5 L48 25.5 L17 26.5 Z" fill="#e6e6e6" stroke="#8c8c8c" stroke-width="1"/>
<path d="M19.5 5.8 L43.5 5.5 L43.3 22.6 L19.8 23 Z" fill="#e02818"/>
<path d="M20.8 7 L42.2 6.8 L42 21.4 L21 21.7 Z" fill="url(#sc)"/>
</svg>
<div class="ab t c " style="left:1401.0px;width:200px;top:207.5px;height:14px;line-height:14px;font-size:10px;font-weight:bold;color:#111">فضاي</div>
<div class="ab t c " style="left:1401.0px;width:200px;top:218.0px;height:14px;line-height:14px;font-size:10px;font-weight:bold;color:#111">شخصي</div>
<svg class="ab" style="left:1477px;top:243px" width="50" height="46" viewBox="0 0 50 46">
<defs><linearGradient id="ev" x1="0" y1="0" x2="1" y2="1"><stop offset="0" stop-color="#ffffff"/><stop offset="1" stop-color="#c0c8f0"/></linearGradient></defs>
<path d="M3.5 16.5 L12.7 2.8 L14.5 19.5 Z" fill="#f4cc40"/>
<path d="M13.5 4 L27.5 6.8 L25.5 17 L15 20.5 Z" fill="#bfe0f8"/>
<path d="M2.5 16.6 L29.8 12 L32 22.5 L7 34 Z" fill="url(#ev)" stroke="#3a5ad0" stroke-width="1.2"/>
<path d="M2.5 16.6 L12.7 2.3 L16 4.2 M27.5 7 L29.8 12" fill="none" stroke="#3a5ad0" stroke-width="1.1"/>
<path d="M2.5 16.6 L17 25 L29.8 12" fill="none" stroke="#a8b4e8" stroke-width="0.9"/>
<path d="M15 27.2 L40.4 21.1 L46.5 37.8 L20.4 44 Z" fill="url(#ev)" stroke="#3a5ad0" stroke-width="1.4"/>
<path d="M15 27.2 L32 33 L40.4 21.1 M20.4 44 L32 33 L46.5 37.8" fill="none" stroke="#b0bce8" stroke-width="1"/>
</svg>
<div class="ab t c " style="left:1400.0px;width:200px;top:282.0px;height:14px;line-height:14px;font-size:10px;font-weight:bold;color:#111">پیامها</div>
<svg class="ab" style="left:1477px;top:338px" width="48" height="48" viewBox="0 0 48 48">
<path d="M4.5 5.5 H35.5 V38.5 H4.5 Z" fill="#fbfaf4" stroke="#4a7ad8" stroke-width="1"/>
<rect x="4" y="4" width="32" height="8.5" fill="#f07838"/>
<rect x="4" y="4" width="32" height="3" fill="#f89050"/>
<rect x="7" y="15" width="26" height="21" fill="#f8f0d8"/>
<path d="M7 22h26M7 29h26M15.5 15v21M24.5 15v21" stroke="#c8c8c0" stroke-width="1"/>
<path d="M10 1.5v7M31 1.5v7" stroke="#909090" stroke-width="1.6"/>
<path d="M9.5 19.5 L11.6 24.2 L16.5 24.7 L12.8 28 L13.9 33 L9.5 30.4 L5.1 33 L6.2 28 L2.5 24.7 L7.4 24.2 Z" fill="#ffc818" stroke="#e86010" stroke-width="1.1"/>
<circle cx="34" cy="34" r="10" fill="#fffdf6" stroke="#e84818" stroke-width="2.2"/>
<circle cx="34" cy="34" r="8.4" fill="none" stroke="#ffc040" stroke-width="1"/>
<path d="M34 27.5 V34 L39.5 34" stroke="#3a60c0" stroke-width="1.2" fill="none"/>
</svg>
<div class="ab t c " style="left:1401.0px;width:200px;top:370.5px;height:14px;line-height:14px;font-size:10px;font-weight:bold;color:#111">کنداکتور</div>
<div class="ab t c " style="left:1401.0px;width:200px;top:383.0px;height:14px;line-height:14px;font-size:10px;font-weight:bold;color:#111">پخش</div>
<svg class="ab" style="left:1476px;top:406px" width="50" height="48" viewBox="0 0 50 48">
<defs><linearGradient id="dp" x1="0" y1="0" x2="1" y2="1"><stop offset="0" stop-color="#ffffff"/><stop offset="1" stop-color="#8ab8f0"/></linearGradient></defs>
<path d="M14 8 L23 3.5 L41 11 L37 27 L6 33 Z" fill="url(#dp)" stroke="#3a70e0" stroke-width="1.1"/>
<path d="M14 8 L23 3.5 L21.5 12 Z" fill="#e8f0fc" stroke="#3a70e0" stroke-width="0.8"/>
<path d="M7.5 17 L9.6 35" stroke="#18a028" stroke-width="2.6"/>
<path d="M7.5 17 Q16 20 18.5 27 Q13 23 8.5 23 Z" fill="#28b030" stroke="#108018" stroke-width="0.6"/>
<ellipse cx="6.3" cy="36" rx="4.8" ry="3.3" fill="#30b838" stroke="#108018" stroke-width="0.6"/>
<rect x="12.8" y="27.8" width="14.7" height="16.2" fill="#e4e4e4" stroke="#909090" stroke-width="0.9"/>
<rect x="14.6" y="29.6" width="11" height="6.5" fill="#8cc8f4"/><rect x="14.6" y="35.5" width="11" height="4.5" fill="#40a030"/>
<circle cx="18" cy="31.5" r="1.3" fill="#ffe040"/>
<path d="M25 35 L44 26 L47.5 40 L30.5 47.5 Z" fill="#e4e4e4" stroke="#a05050" stroke-width="0.9"/>
<path d="M23.4 31 L42.2 19.5 L44 23.2 L25.2 35 Z" fill="#e02828" stroke="#902020" stroke-width="0.5"/>
<path d="M25.2 35.2 L44 25.6 L45.2 28.6 L26.2 38 Z" fill="#e02828" stroke="#902020" stroke-width="0.5"/>
<path d="M27 31.5l2-1.2M31 29l2-1.2M35 26.5l2-1.2M39 24l2-1.2M28 35.5l2-1M32 33.5l2-1M36 31.5l2-1M40 29.5l2-1" stroke="#fff" stroke-width="1.3"/>
</svg>
<div class="ab t c " style="left:1401.0px;width:200px;top:447.5px;height:14px;line-height:14px;font-size:10px;font-weight:bold;color:#111">جدول پخش</div>
<svg class="ab" style="left:1481px;top:471px" width="42" height="49" viewBox="0 0 42 49">
<defs><linearGradient id="ap" x1="0" y1="0" x2="1" y2="1"><stop offset="0" stop-color="#ffffff"/><stop offset="1" stop-color="#cfcfcf"/></linearGradient></defs>
<path d="M2.5 1.5 H38.5 V38 L30 46.5 H2.5 Z" fill="url(#ap)" stroke="#c8c8c8" stroke-width="1"/>
<path d="M38.5 38 L30 46.5 L31 37 Z" fill="#e8e8e8" stroke="#aaa" stroke-width="0.8"/>
<path d="M7 21 H11 L17 16 V32 L11 27 H7 Z" fill="#20a030"/>
<path d="M20 18 Q23 24 20 30 M24 15 Q29 24 24 33 M28 12 Q35 24 28 36" fill="none" stroke="#20a030" stroke-width="2.2"/>
</svg>
<div class="ab t c " style="left:1401.0px;width:200px;top:512.0px;height:14px;line-height:14px;font-size:10px;font-weight:bold;color:#111">آرشیو</div>
<svg class="ab" style="left:1474px;top:570px" width="52" height="44" viewBox="0 0 52 44">
<defs><radialGradient id="spk" cx="0.45" cy="0.5" r="0.6"><stop offset="0" stop-color="#f0f0f0"/><stop offset="1" stop-color="#707070"/></radialGradient></defs>
<path d="M2 12 L24 2 L28 9 L6 19 Z" fill="#707070" stroke="#555" stroke-width="0.6"/>
<path d="M7 12l4-2M14 9l4-2M20 6l4-2" stroke="#e8e8e8" stroke-width="1.8"/>
<path d="M6 19 L28 9 L40 30 L18 41 Z" fill="#d8e8f8" stroke="#888" stroke-width="1"/>
<path d="M18 41 L40 30 L41 33 L19 44 Z" fill="#999"/>
<path d="M22 14 H30 L42 3 V33 L30 22 H22 Z" fill="#2a6ae8" stroke="#1a48b0" stroke-width="1"/>
<ellipse cx="40" cy="18" rx="8" ry="14" fill="#3a7af0" stroke="#1a48b0" stroke-width="1"/>
<ellipse cx="40.5" cy="18" rx="6" ry="11.5" fill="url(#spk)"/>
<ellipse cx="36.5" cy="18" rx="2.3" ry="3.5" fill="#f4f4f4"/>
</svg>
<div class="ab t c " style="left:1401.0px;width:200px;top:607.8px;height:14px;line-height:14px;font-size:10px;font-weight:bold;color:#111">برنامه جدید</div>
<style>
.gb{border:1px solid #d6d6cc;border-radius:4px}
.gt{background:#f4f4f4;color:#2f62d8;padding:0 2px;-webkit-text-stroke:0.1px #2f62d8}
.cell{-webkit-text-stroke:0.25px #222;overflow:hidden;display:flex;align-items:center;justify-content:center;text-align:center;direction:rtl;font-size:10px;line-height:11px;color:#222}
.sep{border-bottom:1px solid #c4dcea}
</style>
</body></html>
